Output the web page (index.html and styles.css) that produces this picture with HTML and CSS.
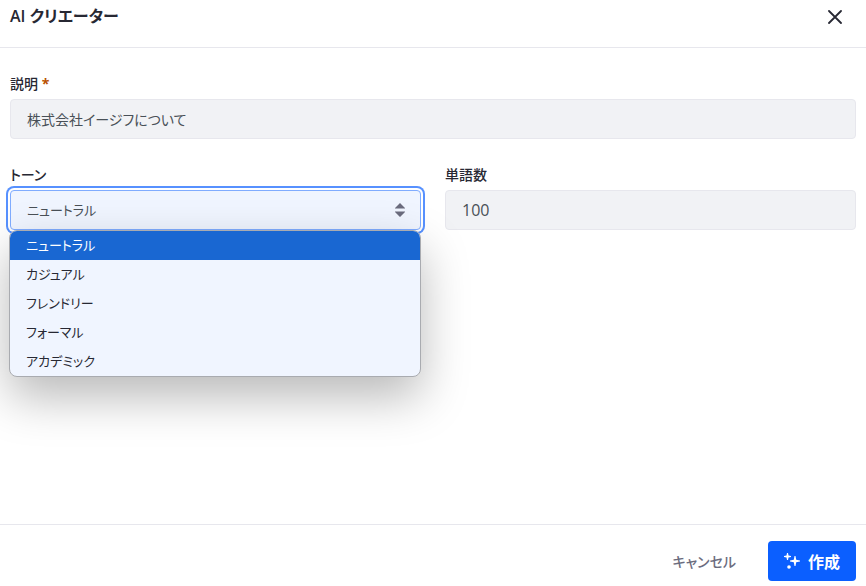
FILE: index.html
```html
<!DOCTYPE html>
<html lang="ja">
<head>
    <meta charset="UTF-8">
    <meta name="viewport" content="width=device-width, initial-scale=1.0">
    <title>AI クリエーター</title>
    <link rel="stylesheet" href="styles.css">
</head>
<body>
    <form class="modal">
        <header class="modal-header">
            <h1>AI クリエーター</h1>
            <button type="button" class="close" aria-label="閉じる">
                <svg width="14" height="14" viewBox="0 0 14 14">
                    <path d="M1 1L13 13M13 1L1 13" fill="none" stroke="currentColor" stroke-width="1.8" stroke-linecap="round"/>
                </svg>
            </button>
        </header>
        <main class="modal-body">
            <div class="form-group">
                <label for="description">説明 <span class="required">*</span></label>
                <input type="text" id="description" class="form-control" value="株式会社イージフについて" required>
            </div>
            <div class="row">
                <div class="form-group">
                    <label for="tone">トーン</label>
                    <div class="select-wrapper">
                        <select id="tone" class="form-control focused">
                            <option selected>ニュートラル</option>
                            <option>カジュアル</option>
                            <option>フレンドリー</option>
                            <option>フォーマル</option>
                            <option>アカデミック</option>
                        </select>
                        <svg class="caret" width="10" height="14" viewBox="0 0 10 14">
                            <path d="M5 0L10 5V5.500H0V5ZM0 8.500H10V9L5 14L0 9Z" fill="currentColor"/>
                        </svg>
                        <ul class="menu" role="listbox" aria-label="トーン">
                            <li class="active" role="option" aria-selected="true">ニュートラル</li>
                            <li role="option">カジュアル</li>
                            <li role="option">フレンドリー</li>
                            <li role="option">フォーマル</li>
                            <li role="option">アカデミック</li>
                        </ul>
                    </div>
                </div>
                <div class="form-group">
                    <label for="wordCount">単語数</label>
                    <input type="text" inputmode="numeric" id="wordCount" class="form-control number" value="100">
                </div>
            </div>
        </main>
        <footer class="modal-footer">
            <button type="button" class="btn cancel">キャンセル</button>
            <button type="submit" class="btn create">
                <svg width="16" height="16" viewBox="0 0 16 16" fill="currentColor">
                    <path d="M3 0H4L4.500 2.500L7 3V4L4.500 4.500L4 7H3L2.500 4.500L0 4V3L2.500 2.500Z"/>
                    <path d="M10.500 3H11.500L12.200 6.800L16 7.500V8.500L12.200 9.200L11.500 13H10.500L9.800 9.200L6 8.500V7.500L9.800 6.800Z"/>
                    <circle cx="5" cy="14" r="1.800"/>
                </svg>
                <span>作成</span>
            </button>
        </footer>
    </form>
</body>
</html>
```
FILE: styles.css
```css
* {
    box-sizing: border-box;
}

body {
    margin: 0;
    font-family: "Open Sans", "Noto Sans CJK JP", sans-serif;
    font-size: 14px;
    font-feature-settings: "palt";
    color: #272833;
    background-color: #fff;
}

button,
input,
select {
    font-family: inherit;
    font-feature-settings: inherit;
}

.modal {
    display: flex;
    flex-direction: column;
    min-height: 100vh;
}

/* Header */
.modal-header {
    display: flex;
    align-items: center;
    justify-content: space-between;
    padding: 0 10px 14px;
    border-bottom: 1px solid #e7e7ed;
}

.modal-header h1 {
    margin: 0;
    font-size: 16px;
    font-weight: 600;
    line-height: 33px;
}

.close {
    display: flex;
    align-items: center;
    justify-content: center;
    width: 32px;
    height: 32px;
    margin-right: 5px;
    padding: 0;
    background: none;
    border: none;
    color: #272833;
    cursor: pointer;
}

/* Form */
.modal-body {
    flex: 1;
    padding: 25px 10px;
}

.form-group {
    margin-bottom: 25px;
}

.form-group label {
    display: block;
    margin-bottom: 5px;
    font-size: 14px;
    font-weight: 500;
    line-height: 21px;
}

.required {
    color: #b95000;
    font-weight: 700;
}

.form-control {
    display: block;
    width: 100%;
    height: 40px;
    padding: 0 16px;
    background-color: #f1f2f5;
    border: 1px solid #e7e7ed;
    border-radius: 4px;
    color: #495057;
    font-size: 14px;
    outline: none;
}

.number {
    font-size: 16px;
}

.row {
    display: grid;
    grid-template-columns: 1fr 1fr;
    gap: 24px;
}

.select-wrapper {
    position: relative;
}

select.form-control {
    appearance: none;
    font-size: 13px;
}

.form-control.focused,
select.form-control:focus {
    background-color: #f0f5ff;
    border-color: #80acff;
    box-shadow: 0 0 0 2px #fff, 0 0 0 4px #5791ff;
}

.caret {
    position: absolute;
    top: 13px;
    right: 16px;
    color: #6b6c7e;
    pointer-events: none;
}

/* Opened list of the select */
.menu {
    position: absolute;
    top: 100%;
    left: -1px;
    right: 0;
    margin: 0;
    padding: 0;
    overflow: hidden;
    list-style: none;
    background-color: #f0f5ff;
    border: 1px solid #a9abb0;
    border-radius: 8px;
    box-shadow: 0 20px 48px rgba(0, 0, 0, 0.28);
}

.menu li {
    padding: 0 16px;
    font-size: 13px;
    line-height: 29px;
}

.menu .active {
    background-color: #1967d2;
    color: #fff;
}

/* Footer */
.modal-footer {
    display: flex;
    justify-content: flex-end;
    gap: 16px;
    padding: 16px 10px 5px;
    border-top: 1px solid #e7e7ed;
}

.btn {
    display: flex;
    align-items: center;
    gap: 8px;
    height: 40px;
    padding: 0 16px;
    border: none;
    border-radius: 4px;
    font-size: 16px;
    font-weight: 600;
    cursor: pointer;
}

.cancel {
    background: none;
    color: #6b6c7e;
    font-size: 14px;
    font-weight: 500;
}

.create {
    background-color: #0b5fff;
    color: #fff;
}
```
